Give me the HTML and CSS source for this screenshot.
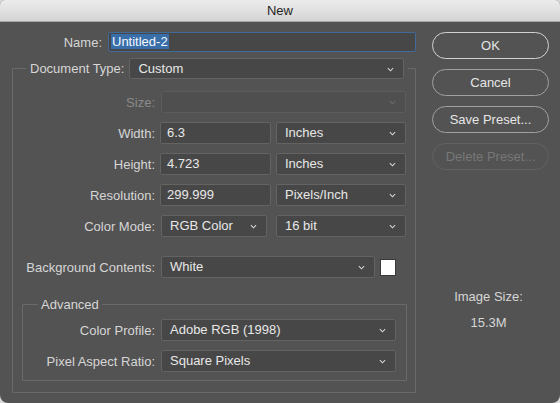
FILE: index.html
```html
<!DOCTYPE html>
<html lang="en">
<head>
  <meta charset="UTF-8">
  <title>New</title>
  <link rel="stylesheet" href="styles.css">
</head>
<body>
  <div class="window">
    <div class="titlebar">New</div>
    <div class="dialog">
      <div class="main">
        <div class="name-row">
          <label class="label name-label">Name:</label>
          <div class="field focus"><span class="sel">Untitled-2</span></div>
        </div>

        <fieldset class="group">
          <legend class="doc-type">
            <span class="label">Document Type:</span>
            <div class="select w-doc">Custom
              <svg class="chev" viewBox="0 0 8 5"><path d="M1 1 L4 4 L7 1"/></svg>
            </div>
          </legend>

          <div class="row">
            <span class="label disabled">Size:</span>
            <div class="select w-size disabled">
              <svg class="chev" viewBox="0 0 8 5"><path d="M1 1 L4 4 L7 1"/></svg>
            </div>
          </div>
          <div class="row">
            <span class="label">Width:</span>
            <div class="field w-num">6.3</div>
            <div class="select w-unit">Inches
              <svg class="chev" viewBox="0 0 8 5"><path d="M1 1 L4 4 L7 1"/></svg>
            </div>
          </div>
          <div class="row">
            <span class="label">Height:</span>
            <div class="field w-num">4.723</div>
            <div class="select w-unit">Inches
              <svg class="chev" viewBox="0 0 8 5"><path d="M1 1 L4 4 L7 1"/></svg>
            </div>
          </div>
          <div class="row">
            <span class="label">Resolution:</span>
            <div class="field w-num">299.999</div>
            <div class="select w-unit">Pixels/Inch
              <svg class="chev" viewBox="0 0 8 5"><path d="M1 1 L4 4 L7 1"/></svg>
            </div>
          </div>
          <div class="row">
            <span class="label">Color Mode:</span>
            <div class="select w-mode">RGB Color
              <svg class="chev" viewBox="0 0 8 5"><path d="M1 1 L4 4 L7 1"/></svg>
            </div>
            <div class="select w-unit">16 bit
              <svg class="chev" viewBox="0 0 8 5"><path d="M1 1 L4 4 L7 1"/></svg>
            </div>
          </div>
          <div class="row bg-row">
            <span class="label">Background Contents:</span>
            <div class="select w-bg">White
              <svg class="chev" viewBox="0 0 8 5"><path d="M1 1 L4 4 L7 1"/></svg>
            </div>
            <div class="swatch"></div>
          </div>

          <fieldset class="group advanced">
            <legend class="adv-title">Advanced</legend>
            <div class="row">
              <span class="label">Color Profile:</span>
              <div class="select w-adv">Adobe RGB (1998)
                <svg class="chev" viewBox="0 0 8 5"><path d="M1 1 L4 4 L7 1"/></svg>
              </div>
            </div>
            <div class="row">
              <span class="label">Pixel Aspect Ratio:</span>
              <div class="select w-adv">Square Pixels
                <svg class="chev" viewBox="0 0 8 5"><path d="M1 1 L4 4 L7 1"/></svg>
              </div>
            </div>
          </fieldset>
        </fieldset>
      </div>

      <div class="side">
        <button class="btn default">OK</button>
        <button class="btn">Cancel</button>
        <button class="btn">Save Preset...</button>
        <button class="btn" disabled>Delete Preset...</button>
        <div class="size-info">
          <div>Image Size:</div>
          <div class="size-value">15.3M</div>
        </div>
      </div>
    </div>
  </div>
</body>
</html>
```

FILE: styles.css
```css
* { margin: 0; padding: 0; box-sizing: border-box; }
html, body { width: 100%; height: 100%; background: #d9d9d9; }
body { font-family: 'Liberation Sans', Arial, sans-serif; font-size: 13px; color: #dcdcdc; }

.window { width: 560px; height: 403px; background: #535353; border-radius: 5px 5px 8px 8px; overflow: hidden; }
.titlebar {
  height: 22px; line-height: 22px; text-align: center; color: #262626;
  background: linear-gradient(#ececec, #d4d4d4); border-bottom: 1px solid #a9a9a9;
}

.dialog { display: flex; padding: 10px 0 0 12px; }
.main { width: 404px; }
.side { width: 117px; margin-left: 16px; display: flex; flex-direction: column; }

.label { color: #d6d6d6; text-align: right; white-space: nowrap; }
.label.disabled { color: #8a8a8a; }

.name-row { display: flex; align-items: center; height: 20px; }
.name-label { width: 90px; margin-right: 6px; }

.field, .select {
  height: 22px; line-height: 20px; padding: 0 6px; color: #e8e8e8;
  background: #474747; border: 1px solid #636363; border-radius: 2px;
  white-space: nowrap;
}
.field.focus { flex: 1; height: 20px; line-height: 18px; padding: 0 2px; border-color: #3f6a99; }
.sel { background: #3a6ea8; color: #f4f8ff; padding: 0 1px; }

.select { position: relative; padding-left: 8px; }
.chev { position: absolute; right: 9px; top: 8px; width: 7px; height: 5px; fill: none; stroke: #d8d8d8; stroke-width: 1.2; }
.select.disabled { background: #4f4f4f; border-color: #5c5c5c; }
.select.disabled .chev { stroke: #6c6c6c; }

.group { border: 1px solid #6a6a6a; border-radius: 1px; min-width: 0; }
.group > .row { display: flex; align-items: center; margin-top: 9px; }
.group > .row:first-of-type { margin-top: 0; }
.group > .row > .label { width: 142px; margin-right: 5px; }

.group:not(.advanced) { margin-top: 6px; padding: 12px 0 11px 0; }
.doc-type { display: flex; align-items: center; margin-left: 13px; padding: 0 4px; }
.doc-type .label { margin-right: 5px; }
.w-doc { width: 275px; height: 21px; line-height: 19px; }

.w-size { width: 245px; margin-left: 1px; }
.w-num { width: 111px; }
.w-unit { width: 130px; margin-left: 5px; }
.w-mode { width: 106px; margin-left: 1px; margin-right: 4px; }
.w-bg { width: 214px; margin-left: 1px; }
.w-adv { width: 235px; margin-left: 1px; }
.swatch { width: 16px; height: 17px; margin-left: 5px; background: #fff; border: 1px solid #3a3a3a; }

.group > .bg-row { margin-top: 19px; }

.advanced { margin: 19px 0 0 9px; width: 385px; padding: 7px 0 8px 0; }
.adv-title { margin-left: 15px; padding: 0 3px; color: #d6d6d6; }
.advanced > .row > .label { width: 132px; }

.btn {
  height: 27px; margin-bottom: 10px; border-radius: 14px; background: transparent;
  border: 1px solid #a0a0a0; color: #e6e6e6; font-family: inherit; font-size: 13px;
}
.btn.default { border-color: #d2d2d2; }
.btn:disabled { border-color: #626262; color: #777; }

.size-info { margin-top: 109px; text-align: center; color: #d6d6d6; margin-left: -4px; }
.size-value { margin-top: 11px; }
```
